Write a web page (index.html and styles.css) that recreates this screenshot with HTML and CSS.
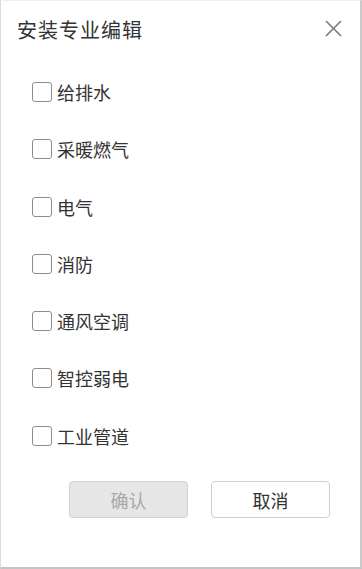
FILE: index.html
```html
<!DOCTYPE html>
<html lang="zh-CN">
<head>
<meta charset="utf-8">
<link rel="stylesheet" href="styles.css">
</head>
<body>
<div class="dialog">
  <div class="header">
    <div class="title">安装专业编辑</div>
    <svg class="close" width="17" height="17" viewBox="0 0 17 17"><path d="M1 1L16 16M16 1L1 16" stroke="#7a7a7a" stroke-width="1.6" fill="none"/></svg>
  </div>
  <div class="list">
    <label class="row"><span class="box"></span><span class="text">给排水</span></label>
    <label class="row"><span class="box"></span><span class="text">采暖燃气</span></label>
    <label class="row"><span class="box"></span><span class="text">电气</span></label>
    <label class="row"><span class="box"></span><span class="text">消防</span></label>
    <label class="row"><span class="box"></span><span class="text">通风空调</span></label>
    <label class="row"><span class="box"></span><span class="text">智控弱电</span></label>
    <label class="row"><span class="box"></span><span class="text">工业管道</span></label>
  </div>
  <div class="footer">
    <button class="btn btn-disabled">确认</button>
    <button class="btn btn-default">取消</button>
  </div>
</div>
</body>
</html>
```

FILE: styles.css
```css
html, body {
  margin: 0;
  padding: 0;
  background: #fff;
}
.dialog {
  width: 362px;
  height: 569px;
  box-sizing: border-box;
  border-left: 1px solid #dcdcdc;
  border-right: 2px solid #c9c9c9;
  border-bottom: 2px solid #c4c4c4;
  border-top: 1px solid #f0f0f0;
  background: #fff;
  font-family: "Noto Sans CJK SC", "Noto Sans", sans-serif;
  display: flex;
  flex-direction: column;
}
.header {
  display: flex;
  justify-content: space-between;
  padding: 15px 18px 0 16px;
  height: 28px;
}
.title {
  font-size: 20px;
  line-height: 28px;
  color: #333;
  letter-spacing: 1px;
}
.close {
  margin-top: 4px;
}
.list {
  display: flex;
  flex-direction: column;
  gap: 37.25px;
  margin-top: 38px;
  padding-left: 31px;
}
.row {
  display: flex;
  align-items: center;
  height: 20px;
}
.box {
  width: 20px;
  height: 20px;
  box-sizing: border-box;
  border: 1.5px solid #8c8c8c;
  border-radius: 3px;
  background: #fff;
}
.text {
  margin-left: 5px;
  font-size: 18px;
  line-height: 20px;
  color: #333;
}
.footer {
  display: flex;
  justify-content: flex-end;
  gap: 23px;
  margin-top: 35.5px;
  padding-right: 30px;
}
.btn {
  width: 119px;
  height: 37px;
  border-radius: 4px;
  font-family: "Noto Sans CJK SC", "Noto Sans", sans-serif;
  font-size: 18px;
  padding: 0;
}
.btn-disabled {
  background: #e6e6e6;
  border: 1px solid #c9d1de;
  color: #a8a8a8;
}
.btn-default {
  background: #fff;
  border: 1px solid #cfcfcf;
  color: #333;
}
```
